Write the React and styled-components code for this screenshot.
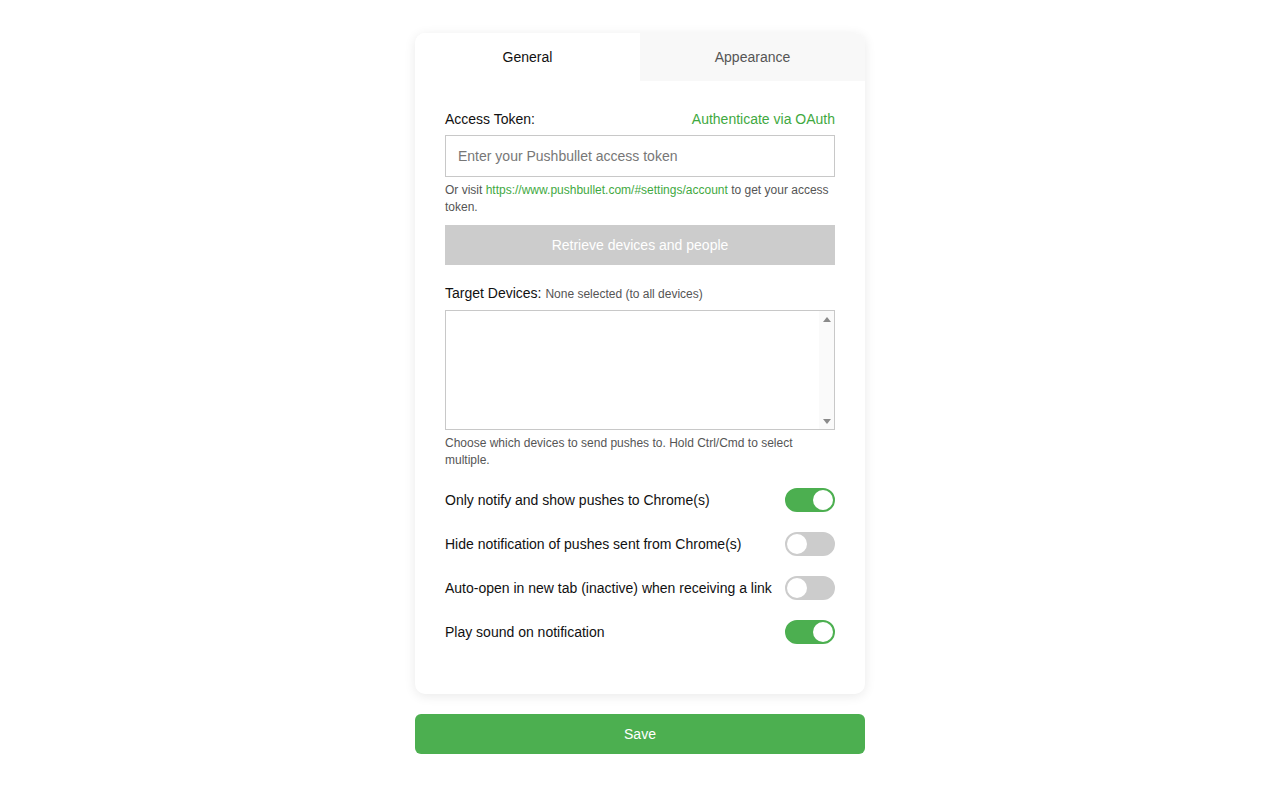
import React from "react";
import styled, { createGlobalStyle } from "styled-components";

const Global = createGlobalStyle`
  * { box-sizing: border-box; }
  body {
    margin: 0;
    background: #ffffff;
    font-family: "Liberation Sans", Arial, sans-serif;
    color: #111;
  }
`;

const Page = styled.div`
  width: 450px;
  margin: 33px auto 0;
  display: flex;
  flex-direction: column;
  gap: 20px;
`;

const Card = styled.div`
  background: #fff;
  border-radius: 10px;
  box-shadow: 0 2px 12px rgba(0, 0, 0, 0.09);
  overflow: hidden;
`;

const Tabs = styled.div`
  display: grid;
  grid-template-columns: 1fr 1fr;
  height: 48px;
`;

const Tab = styled.div`
  display: flex;
  align-items: center;
  justify-content: center;
  font-size: 14px;
  background: ${(p) => (p.$active ? "#ffffff" : "#f8f8f8")};
  color: ${(p) => (p.$active ? "#111" : "#555")};
`;

const Body = styled.div`
  padding: 30px 30px 50px;
  display: flex;
  flex-direction: column;
`;

const LabelRow = styled.div`
  display: flex;
  justify-content: space-between;
  align-items: baseline;
  font-size: 14px;
  line-height: 16px;
  margin-bottom: 8px;
`;

const Label = styled.span`
  color: #111;
`;

const SubLabel = styled.span`
  font-size: 12px;
  color: #555;
`;

const Link = styled.a`
  color: #3fa93f;
  text-decoration: none;
  font-size: ${(p) => (p.$small ? "inherit" : "14px")};
`;

const Input = styled.input`
  height: 42px;
  width: 100%;
  border: 1px solid #c8c8c8;
  padding: 0 12px;
  font-family: inherit;
  font-size: 14px;
  outline: none;
  &::placeholder { color: #777; }
`;

const Help = styled.p`
  margin: 5px 0 0;
  font-size: 12px;
  line-height: 17px;
  color: #555;
`;

const GrayButton = styled.button`
  margin-top: 9px;
  height: 40px;
  border: none;
  background: #cccccc;
  color: #fff;
  font-family: inherit;
  font-size: 14px;
  width: 100%;
`;

const Section = styled.div`
  margin-top: 20px;
  display: flex;
  flex-direction: column;
`;

const ListBox = styled.div`
  height: 120px;
  border: 1px solid #c8c8c8;
  display: flex;
  justify-content: flex-end;
`;

const Scrollbar = styled.div`
  width: 15px;
  background: #fafafa;
  display: flex;
  flex-direction: column;
  justify-content: space-between;
  align-items: center;
  padding: 6px 0 5px;
`;

const Arrow = styled.span`
  width: 0;
  height: 0;
  border-left: 4px solid transparent;
  border-right: 4px solid transparent;
  ${(p) =>
    p.$up
      ? "border-bottom: 5px solid #8a8a8a;"
      : "border-top: 5px solid #8a8a8a;"}
`;

const Toggles = styled.div`
  margin-top: 19px;
  display: flex;
  flex-direction: column;
  gap: 20px;
`;

const ToggleRow = styled.div`
  display: flex;
  justify-content: space-between;
  align-items: center;
  font-size: 14px;
  color: #111;
`;

const Switch = styled.div`
  width: 50px;
  height: 24px;
  border-radius: 12px;
  border: 2px solid ${(p) => (p.$on ? "#4caf50" : "#cccccc")};
  background: ${(p) => (p.$on ? "#4caf50" : "#cccccc")};
  display: flex;
  justify-content: ${(p) => (p.$on ? "flex-end" : "flex-start")};
  flex-shrink: 0;
`;

const Knob = styled.div`
  width: 20px;
  height: 20px;
  border-radius: 50%;
  background: #fff;
`;

const SaveButton = styled.button`
  height: 40px;
  border: none;
  border-radius: 6px;
  background: #4caf50;
  color: #fff;
  font-family: inherit;
  font-size: 14px;
  width: 100%;
`;

const toggles = [
  ["Only notify and show pushes to Chrome(s)", true],
  ["Hide notification of pushes sent from Chrome(s)", false],
  ["Auto-open in new tab (inactive) when receiving a link", false],
  ["Play sound on notification", true],
];

export default function App() {
  return (
    <>
      <Global />
      <Page>
        <Card>
          <Tabs>
            <Tab $active>General</Tab>
            <Tab>Appearance</Tab>
          </Tabs>
          <Body>
            <LabelRow>
              <Label>Access Token:</Label>
              <Link href="#">Authenticate via OAuth</Link>
            </LabelRow>
            <Input placeholder="Enter your Pushbullet access token" />
            <Help>
              Or visit{" "}
              <Link $small href="#">
                https://www.pushbullet.com/#settings/account
              </Link>{" "}
              to get your access token.
            </Help>
            <GrayButton>Retrieve devices and people</GrayButton>
            <Section>
              <LabelRow>
                <span>
                  <Label>Target Devices: </Label>
                  <SubLabel>None selected (to all devices)</SubLabel>
                </span>
              </LabelRow>
              <ListBox>
                <Scrollbar>
                  <Arrow $up />
                  <Arrow />
                </Scrollbar>
              </ListBox>
              <Help>
                Choose which devices to send pushes to. Hold Ctrl/Cmd to select
                multiple.
              </Help>
            </Section>
            <Toggles>
              {toggles.map(([text, on]) => (
                <ToggleRow key={text}>
                  <span>{text}</span>
                  <Switch $on={on}>
                    <Knob />
                  </Switch>
                </ToggleRow>
              ))}
            </Toggles>
          </Body>
        </Card>
        <SaveButton>Save</SaveButton>
      </Page>
    </>
  );
}
